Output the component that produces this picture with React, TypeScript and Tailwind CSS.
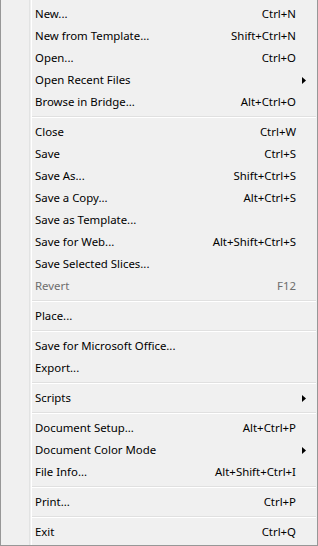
type Item = { label: string; shortcut?: string; sub?: boolean; disabled?: boolean } | "sep";

const items: Item[] = [
  { label: "New...", shortcut: "Ctrl+N" },
  { label: "New from Template...", shortcut: "Shift+Ctrl+N" },
  { label: "Open...", shortcut: "Ctrl+O" },
  { label: "Open Recent Files", sub: true },
  { label: "Browse in Bridge...", shortcut: "Alt+Ctrl+O" },
  "sep",
  { label: "Close", shortcut: "Ctrl+W" },
  { label: "Save", shortcut: "Ctrl+S" },
  { label: "Save As...", shortcut: "Shift+Ctrl+S" },
  { label: "Save a Copy...", shortcut: "Alt+Ctrl+S" },
  { label: "Save as Template..." },
  { label: "Save for Web...", shortcut: "Alt+Shift+Ctrl+S" },
  { label: "Save Selected Slices..." },
  { label: "Revert", shortcut: "F12", disabled: true },
  "sep",
  { label: "Place..." },
  "sep",
  { label: "Save for Microsoft Office..." },
  { label: "Export..." },
  "sep",
  { label: "Scripts", sub: true },
  "sep",
  { label: "Document Setup...", shortcut: "Alt+Ctrl+P" },
  { label: "Document Color Mode", sub: true },
  { label: "File Info...", shortcut: "Alt+Shift+Ctrl+I" },
  "sep",
  { label: "Print...", shortcut: "Ctrl+P" },
  "sep",
  { label: "Exit", shortcut: "Ctrl+Q" },
];

function Arrow() {
  return (
    <svg width="4" height="7" viewBox="0 0 4 7" className="block">
      <path d="M0 0 L4 3.5 L0 7 Z" fill="#000" />
    </svg>
  );
}

export default function App() {
  return (
    <div className="w-[318px] h-[546px] bg-[#f0f0f0] border-x border-b border-[#979797] pt-[3px] pb-[2px] font-['Noto_Sans',sans-serif] text-[11.4px] text-black relative">
      {/* gutter line down the left */}
      <div className="absolute left-[28px] top-0 bottom-0 w-[2px] border-l border-[#e2e3e3]">
        <div className="w-px h-full bg-white translate-x-[1px]" />
      </div>
      {items.map((it, i) =>
        it === "sep" ? (
          <div key={i} className="h-[8px] flex flex-col justify-center pl-[30px] pr-[1px]">
            <div className="h-px bg-[#e0e0e0]" />
            <div className="h-px bg-white" />
          </div>
        ) : (
          <div
            key={i}
            className={`h-[22px] flex items-center pl-[34px] pr-[21px] relative ${it.disabled ? "text-[#6d6d6d]" : ""}`}
          >
            <span>{it.label}</span>
            {it.shortcut && <span className="ml-auto">{it.shortcut}</span>}
            {it.sub && (
              <span className="absolute right-[11px] top-[8px]">
                <Arrow />
              </span>
            )}
          </div>
        )
      )}
    </div>
  );
}
